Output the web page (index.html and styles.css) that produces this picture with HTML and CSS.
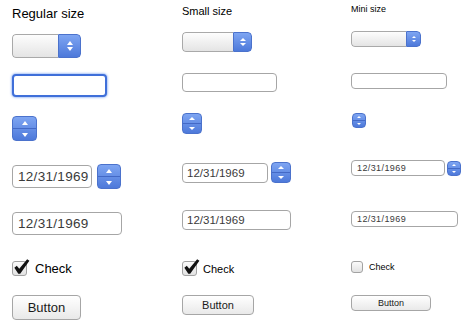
FILE: index.html
```html
<!DOCTYPE html>
<html lang="en">
<head>
    <meta charset="UTF-8">
    <title>Control sizes</title>
    <link rel="stylesheet" href="styles.css">
</head>
<body>
    <div class="sheet">
        <div class="col regular">
            <div class="title">Regular size</div>
            <div class="popup">
                <span class="popup-face"></span>
                <span class="popup-arrows"><i class="up"></i><i class="down"></i></span>
            </div>
            <div class="field focused"></div>
            <div class="stepper"><span><i class="up"></i></span><span><i class="down"></i></span></div>
            <div class="date-row">
                <div class="field date short">12/31/1969</div>
                <div class="stepper"><span><i class="up"></i></span><span><i class="down"></i></span></div>
            </div>
            <div class="field date long">12/31/1969</div>
            <label class="check">
                <span class="box checked">
                    <svg class="mark" viewBox="0 0 18 17"><path d="M1.4 9.4 L4 7.2 L6.6 10.4 L15 0.2 L17.4 1.8 L7.6 15.8 L5.6 15.8 Z"/></svg>
                </span>
                <span>Check</span>
            </label>
            <div class="button">Button</div>
        </div>

        <div class="col small">
            <div class="title">Small size</div>
            <div class="popup">
                <span class="popup-face"></span>
                <span class="popup-arrows"><i class="up"></i><i class="down"></i></span>
            </div>
            <div class="field"></div>
            <div class="stepper"><span><i class="up"></i></span><span><i class="down"></i></span></div>
            <div class="date-row">
                <div class="field date short">12/31/1969</div>
                <div class="stepper"><span><i class="up"></i></span><span><i class="down"></i></span></div>
            </div>
            <div class="field date long">12/31/1969</div>
            <label class="check">
                <span class="box checked">
                    <svg class="mark" viewBox="0 0 18 17"><path d="M1.4 9.4 L4 7.2 L6.6 10.4 L15 0.2 L17.4 1.8 L7.6 15.8 L5.6 15.8 Z"/></svg>
                </span>
                <span>Check</span>
            </label>
            <div class="button">Button</div>
        </div>

        <div class="col mini">
            <div class="title">Mini size</div>
            <div class="popup">
                <span class="popup-face"></span>
                <span class="popup-arrows"><i class="up"></i><i class="down"></i></span>
            </div>
            <div class="field"></div>
            <div class="stepper"><span><i class="up"></i></span><span><i class="down"></i></span></div>
            <div class="date-row">
                <div class="field date short">12/31/1969</div>
                <div class="stepper"><span><i class="up"></i></span><span><i class="down"></i></span></div>
            </div>
            <div class="field date long">12/31/1969</div>
            <label class="check">
                <span class="box"></span>
                <span>Check</span>
            </label>
            <div class="button">Button</div>
        </div>
    </div>
</body>
</html>
```

FILE: styles.css
```css
body {
    margin: 0;
    font-family: 'Liberation Sans', Arial, sans-serif;
    color: #000000;
    background-color: #ffffff;
}

.sheet {
    display: grid;
    grid-template-columns: 170px 169px 1fr;
    padding-left: 12px;
}

.col {
    display: flex;
    flex-direction: column;
    align-items: flex-start;
}

/* shared pieces */

.popup {
    display: flex;
    box-sizing: border-box;
    border-radius: 4px;
    overflow: hidden;
}

.popup-face {
    flex: 1;
    border: 1px solid #a9a9a9;
    border-right: none;
    border-radius: 4px 0 0 4px;
    background: linear-gradient(#fdfdfd, #e4e4e4);
}

.popup-arrows,
.stepper {
    background: linear-gradient(#7ea5f2, #4d79da);
    border: 1px solid #4b72cc;
    box-sizing: border-box;
}

.popup-arrows {
    display: flex;
    flex-direction: column;
    align-items: center;
    justify-content: center;
    gap: 2px;
    border-radius: 0 4px 4px 0;
}

.stepper {
    display: flex;
    flex-direction: column;
    border-radius: 4px;
    overflow: hidden;
}

.stepper span {
    flex: 1;
    display: flex;
    align-items: center;
    justify-content: center;
}

.stepper span + span {
    border-top: 1px solid #4369c6;
}

.up,
.down {
    width: 0;
    height: 0;
    border-left: var(--tri) solid transparent;
    border-right: var(--tri) solid transparent;
}

.up {
    border-bottom: var(--tri-h) solid #ffffff;
}

.down {
    border-top: var(--tri-h) solid #ffffff;
}

.field {
    box-sizing: border-box;
    border: 1px solid #a6a6a6;
    border-radius: 4px;
    background-color: #ffffff;
    color: #3a3a3a;
    display: flex;
    align-items: center;
}

.field.focused {
    border: 2px solid #3f6fd9;
    box-shadow: 0 0 2px 1px rgba(110, 155, 240, 0.55);
}

.date-row {
    display: flex;
    align-items: center;
}

.check {
    display: flex;
    align-items: center;
}

.box {
    position: relative;
    box-sizing: border-box;
    border: 1px solid #a2a2a2;
    border-radius: 3px;
    background: linear-gradient(#fbfbfb, #e2e2e2);
}

.box .mark {
    position: absolute;
    left: 0;
    bottom: 0;
    fill: #111111;
}

.button {
    box-sizing: border-box;
    display: flex;
    align-items: center;
    justify-content: center;
    border: 1px solid #a6a6a6;
    border-radius: 4px;
    background: linear-gradient(#ffffff, #e9e9e9);
    color: #1a1a1a;
}

/* regular */

.regular {
    --tri: 3.5px;
    --tri-h: 4px;
}

.regular .title {
    font-size: 13px;
    line-height: 15px;
    margin-top: 6px;
}

.regular .popup {
    width: 69px;
    height: 24px;
    margin-top: 13px;
}

.regular .popup-arrows {
    width: 23px;
}

.regular > .field {
    width: 95px;
    height: 23px;
    margin-top: 16px;
}

.regular > .stepper {
    width: 25px;
    height: 25px;
    margin-top: 19px;
}

.regular .date-row {
    height: 25px;
    margin-top: 23px;
    gap: 5px;
}

.regular .date-row .stepper {
    width: 24px;
    height: 25px;
}

.regular .date {
    height: 23px;
    font-size: 13.5px;
    padding-left: 5px;
    letter-spacing: 0.3px;
}

.regular .date.short {
    width: 80px;
}

.regular .date.long {
    width: 110px;
    margin-top: 23px;
}

.regular .check {
    margin-top: 26px;
    height: 15px;
    gap: 8px;
    font-size: 13px;
}

.regular .box {
    width: 15px;
    height: 15px;
}

.regular .mark {
    width: 17px;
    height: 16px;
}

.regular .button {
    width: 69px;
    height: 25px;
    margin-top: 19px;
    font-size: 13px;
}

/* small */

.small {
    --tri: 3px;
    --tri-h: 3px;
}

.small .title {
    font-size: 11px;
    line-height: 13px;
    margin-top: 5px;
}

.small .popup {
    width: 70px;
    height: 20px;
    margin-top: 14px;
}

.small .popup-arrows {
    width: 19px;
    gap: 2px;
}

.small > .field {
    width: 95px;
    height: 19px;
    margin-top: 21px;
}

.small > .stepper {
    width: 20px;
    height: 21px;
    margin-top: 21px;
}

.small .date-row {
    height: 21px;
    margin-top: 28px;
    gap: 3px;
}

.small .date-row .stepper {
    width: 20px;
    height: 21px;
}

.small .date {
    height: 20px;
    font-size: 11.5px;
    padding-left: 4px;
}

.small .date.short {
    width: 86px;
}

.small .date.long {
    width: 109px;
    margin-top: 27px;
}

.small .check {
    margin-top: 31px;
    height: 15px;
    gap: 6px;
    font-size: 11px;
}

.small .box {
    width: 15px;
    height: 15px;
}

.small .mark {
    width: 17px;
    height: 16px;
}

.small .button {
    width: 72px;
    height: 20px;
    margin-top: 19px;
    font-size: 11px;
}

/* mini */

.mini {
    --tri: 2px;
    --tri-h: 2.5px;
}

.mini .title {
    font-size: 9px;
    line-height: 11px;
    margin-top: 4px;
}

.mini .popup {
    width: 70px;
    height: 16px;
    margin-top: 16px;
}

.mini .popup-arrows {
    width: 15px;
    gap: 2px;
}

.mini > .field {
    width: 96px;
    height: 16px;
    margin-top: 26px;
}

.mini > .stepper {
    width: 14px;
    height: 15px;
    margin-top: 24px;
    margin-left: 1px;
}

.mini .date-row {
    height: 16px;
    margin-top: 32px;
    gap: 2px;
}

.mini .date-row .stepper {
    width: 14px;
    height: 15px;
}

.mini .date {
    height: 16px;
    font-size: 9px;
    padding-left: 5px;
    letter-spacing: 0.4px;
}

.mini .date.short {
    width: 94px;
}

.mini .date.long {
    width: 107px;
    margin-top: 35px;
}

.mini .check {
    margin-top: 34px;
    height: 12px;
    gap: 6px;
    font-size: 9px;
}

.mini .box {
    width: 12px;
    height: 12px;
}

.mini .button {
    width: 80px;
    height: 16px;
    margin-top: 22px;
    font-size: 9px;
}
```
